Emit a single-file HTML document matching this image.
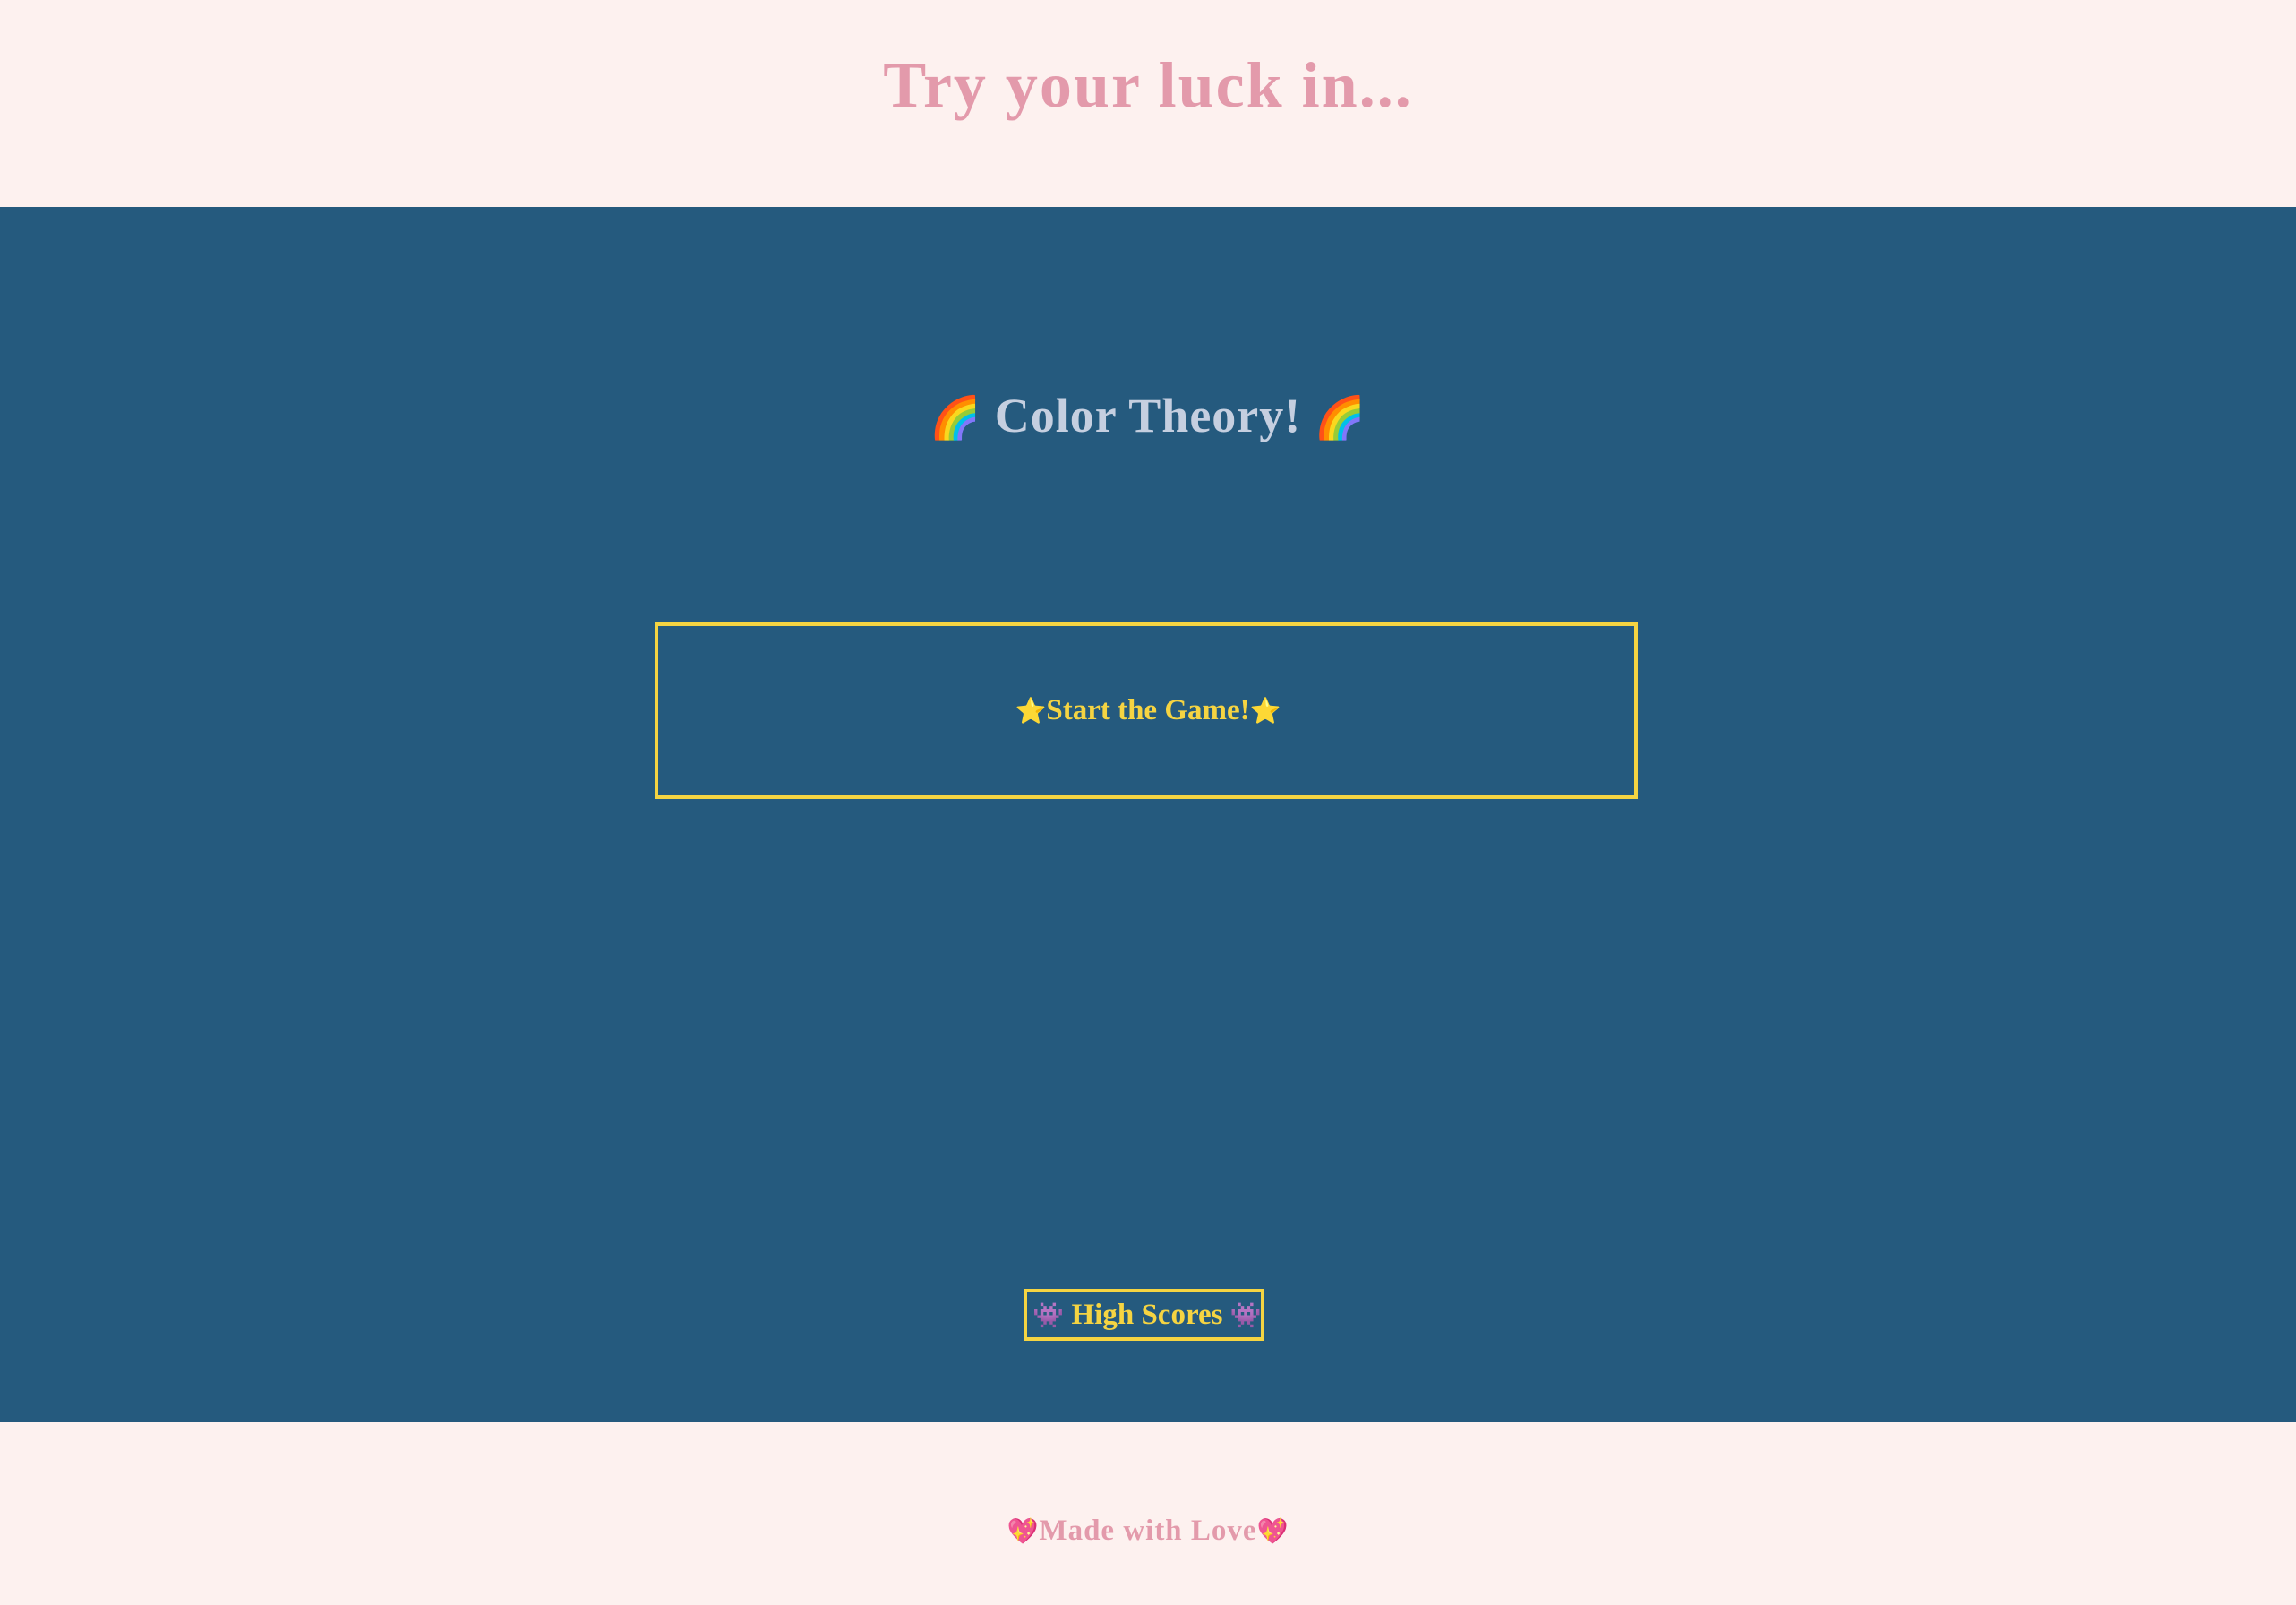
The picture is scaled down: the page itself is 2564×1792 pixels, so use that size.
<!DOCTYPE html>
<html><head><meta charset="utf-8"><style>
html,body{margin:0;padding:0;width:2564px;height:1792px;overflow:hidden;background:#fdf1ef;font-family:"Liberation Serif",Georgia,serif;font-weight:bold}
.hdr{position:absolute;left:0;top:0;width:2564px;height:231px;background:#fdf1ef}
.t{position:absolute;left:0;width:2564px;text-align:center;white-space:nowrap}
.main{position:absolute;left:0;top:231px;width:2564px;height:1357px;background:#255a7e}
.box{position:absolute;border:4px solid #f5d442;box-sizing:border-box}
.e{font-size:0.85em}
</style></head><body>
<div class="hdr"></div>
<div class="t" style="top:50px;font-size:72px;line-height:90px;color:#e39aab;letter-spacing:2px">Try your luck in...</div>
<div class="main"></div>
<div class="t" style="top:432px;font-size:54px;line-height:64px;color:#c5cfe0;letter-spacing:1px"><span class="e">🌈</span> Color Theory! <span class="e">🌈</span></div>
<div class="box" style="left:731px;top:695px;width:1098px;height:197px"></div>
<div class="t" style="top:773px;font-size:33px;line-height:40px;color:#f5d442"><span class="e">⭐</span>Start the Game!<span class="e">⭐</span></div>
<div class="box" style="left:1143px;top:1439px;width:269px;height:58px"></div>
<div class="t" style="top:1448px;font-size:33px;line-height:40px;color:#f5d442;left:-1px"><span class="e">👾</span> High Scores <span class="e">👾</span></div>
<div class="t" style="top:1689px;font-size:33px;line-height:40px;color:#e39aab;letter-spacing:1px"><span class="e">💖</span>Made with Love<span class="e">💖</span></div>
</body></html>
